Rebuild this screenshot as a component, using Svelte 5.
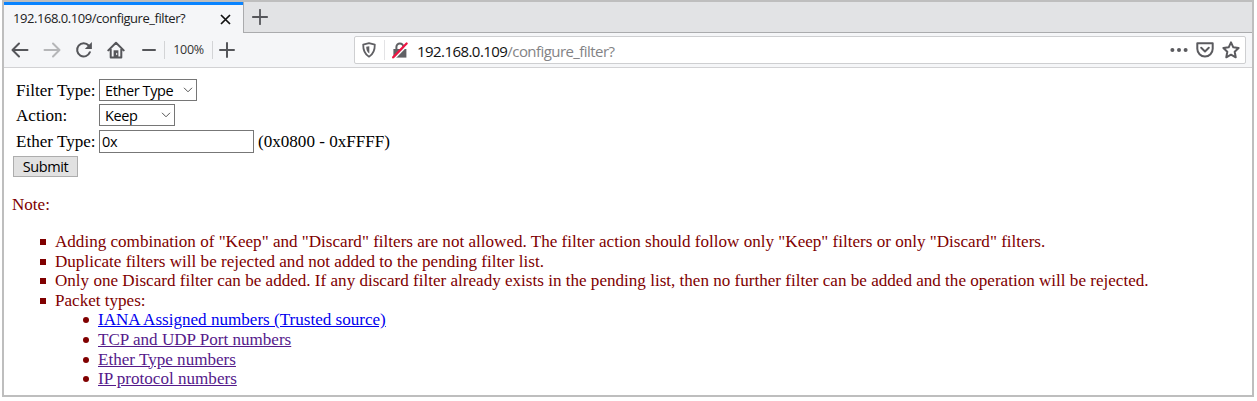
<script>
  const notes = [
    'Adding combination of "Keep" and "Discard" filters are not allowed. The filter action should follow only "Keep" filters or only "Discard" filters.',
    'Duplicate filters will be rejected and not added to the pending filter list.',
    'Only one Discard filter can be added. If any discard filter already exists in the pending list, then no further filter can be added and the operation will be rejected.'
  ];
  const links = [
    { label: 'IANA Assigned numbers (Trusted source)', visited: false },
    { label: 'TCP and UDP Port numbers', visited: true },
    { label: 'Ether Type numbers', visited: true },
    { label: 'IP protocol numbers', visited: true }
  ];
</script>

<div class="window">
  <div class="tabs">
    <div class="tab">
      <span class="title">192.168.0.109/configure_filter?</span>
      <svg class="close" width="11" height="11" viewBox="0 0 11 11"><path d="M1 1l9 9M10 1l-9 9" stroke="#111" stroke-width="1.7" /></svg>
    </div>
    <div class="strip">
      <svg width="16" height="16" viewBox="0 0 16 16"><path d="M8 .8v14.4M.8 8h14.4" stroke="#55565a" stroke-width="1.8" stroke-linecap="round" /></svg>
    </div>
  </div>
  <div class="toolbar">
    <div class="nav">
      <svg width="18" height="18" viewBox="0 0 18 18"><path d="M16.5 9H1.8M8 2.5L1.5 9 8 15.5" /></svg>
      <svg class="off" width="18" height="18" viewBox="0 0 18 18"><path d="M1.5 9h14.7M10 2.5L16.5 9 10 15.5" /></svg>
      <svg width="18" height="18" viewBox="0 0 18 18"><path d="M14.9 11.2A6.6 6.6 0 1 1 13.7 4.5" /><path class="solid" d="M16.9 1v7.1H9.8z" /></svg>
      <svg width="18" height="18" viewBox="0 0 18 18"><path d="M1.3 9.4L9 1.8l7.7 7.6M3.7 8v8.5h10.6V8" /><path class="solid" d="M6.6 9.3h4.8V16H6.6z" /><path class="knob" d="M9.7 12.3v1.4" /></svg>
    </div>
    <div class="zoom">
      <svg width="14" height="16" viewBox="0 0 14 16"><path d="M1 8h12" /></svg>
      <span class="level">100%</span>
      <svg width="16" height="16" viewBox="0 0 16 16"><path d="M1 8h14M8 1v14" /></svg>
    </div>
    <div class="address">
      <svg class="shield" width="14" height="16" viewBox="0 0 14 16"><path d="M7 1.2L12.8 2.6C12.9 8.5 11.6 12.2 7 14.7 2.4 12.2 1.1 8.5 1.2 2.6z" fill="none" stroke="#606064" stroke-width="1.8" stroke-linejoin="round" /><path d="M7.3 4.2v7.4C5 10 4.2 7.8 4.2 4.8z" fill="#606064" /></svg>
      <span class="rule"></span>
      <svg class="lock" width="16" height="17" viewBox="0 0 16 17"><path d="M4.4 7.5V5a3.5 3.5 0 0 1 7 0v2.5" fill="none" stroke="#606064" stroke-width="2" /><path d="M1.4 7h13v8.6h-13z" fill="#606064" /><path d="M2.4 16.6L15.6 3" stroke="#fff" stroke-width="1.5" /><path d="M1.2 15.3L14.6 1.5" stroke="#ee1543" stroke-width="2.3" stroke-linecap="round" /></svg>
      <span class="url"><b>192.168.0.109</b>/configure_filter?</span>
      <span class="actions">
        <svg width="18" height="6" viewBox="0 0 18 6"><g fill="#5b5b5f"><circle cx="2.4" cy="3" r="2" /><circle cx="9" cy="3" r="2" /><circle cx="15.6" cy="3" r="2" /></g></svg>
        <svg class="pocket" width="18" height="16" viewBox="0 0 18 16"><path d="M1.3 1.3h15.4v5.5a7.7 7.7 0 0 1-15.4 0z" /><path d="M5.2 5.8L9 9.4l3.8-3.6" /></svg>
        <svg class="star" width="18" height="18" viewBox="0 0 18 18"><path d="M9 1.4l2.3 4.9 5.3.7-3.9 3.8 1 5.5L9 13.7l-4.7 2.6 1-5.5L1.4 7l5.3-.7z" /></svg>
      </span>
    </div>
  </div>
  <div class="page">
    <div class="row first"><span class="label">Filter Type:</span><div class="select wide"><span class="ui">Ether Type</span><svg width="10" height="6" viewBox="0 0 10 6"><path d="M1 .8l4 4 4-4" /></svg></div></div>
    <div class="row second"><span class="label">Action:</span><div class="select"><span class="ui">Keep</span><svg width="10" height="6" viewBox="0 0 10 6"><path d="M1 .8l4 4 4-4" /></svg></div></div>
    <div class="row third"><span class="label">Ether Type:</span><div class="input"><span class="ui">0x</span></div><span class="range">(0x0800 - 0xFFFF)</span></div>
    <button class="ui">Submit</button>
    <div class="note">Note:</div>
    <ul class="notes">
      {#each notes as note}<li>{note}</li>{/each}
      <li>
        <span>Packet types:</span>
        <ul class="links">
          {#each links as link}<li><a href="#top" class:visited={link.visited}>{link.label}</a></li>{/each}
        </ul>
      </li>
    </ul>
  </div>
</div>

<style>
  :global(body) { background: #fff; overflow: hidden; }
  * { box-sizing: border-box; }
  svg { display: block; flex: none; }
  .window { width: 1252px; height: 397px; margin-left: 2px; border: 2px solid #bebebe; background: #fff; overflow: hidden; font-family: "Liberation Serif", serif; font-size: 17.08px; }
  .tabs { display: flex; height: 31px; background: #e2e3e5; }
  .tab { display: flex; align-items: center; width: 239px; background: #f5f6f8; border-top: 3px solid #0a84ff; padding: 0 12px 2px 9px; justify-content: space-between; }
  .close { margin-top: 2px; }
  .title { font: 13px "Open Sans", sans-serif; letter-spacing: -.45px; color: #222; white-space: nowrap; }
  .strip { flex: 1; border-left: 1px solid #aaabad; border-bottom: 1px solid #aaabad; padding: 7px 0 0 8px; }
  .toolbar { display: flex; align-items: center; height: 35px; background: #f5f6f8; border-bottom: 1px solid #d2d2d4; }
  .nav { display: flex; gap: 14px; padding-left: 7px; }
  .nav path, .zoom path { fill: none; stroke: #55565a; stroke-width: 2; stroke-linecap: round; stroke-linejoin: round; }
  .nav .solid { fill: #55565a; stroke: none; }
  .nav .knob { stroke: #f5f6f7; stroke-width: 1; }
  .nav .off path { stroke: #b5b6b8; }
  .zoom { display: flex; align-items: center; margin-left: 17px; }
  .level { width: 49px; height: 18px; margin: 0 6px 0 8px; border: solid #d3d4d6; border-width: 0 1px; font: 12.5px/17px "Open Sans", sans-serif; letter-spacing: -.35px; text-align: center; color: #333; }
  .address { display: flex; align-items: center; width: 892px; height: 28px; margin-left: 119px; background: #fff; border: 1px solid #cecfd1; border-radius: 2px; padding: 0 5px 0 7px; }
  .rule { width: 1px; height: 20px; background: #e3e3e5; margin: 0 7px 0 8px; }
  .url { font: 15px "Open Sans", sans-serif; color: #838386; margin-left: 9px; padding-top: 1px; letter-spacing: -.56px; white-space: nowrap; }
  .url b { font-weight: 400; color: #111; }
  .actions { display: flex; align-items: center; gap: 8px; margin-left: auto; }
  .actions path { fill: none; stroke: #5b5b5f; stroke-width: 2; stroke-linejoin: round; stroke-linecap: round; }
  .page { padding: 11px 8px 0; }
  .row { display: flex; align-items: center; padding-left: 4px; height: 22px; }
  .second { margin-top: 3px; }
  .third { margin-top: 4px; }
  .label { width: 83px; white-space: nowrap; }
  .label, .range { padding-top: 2px; }
  .ui { font-family: "Open Sans", sans-serif; font-size: 14.5px; letter-spacing: -.4px; color: #000; }
  .select { display: flex; align-items: center; justify-content: space-between; width: 76px; height: 22px; border: 1px solid #767676; padding: 0 3px 0 5px; }
  .select.wide { width: 98px; }
  .select path { fill: none; stroke: #555; stroke-width: 1; }
  .input { display: flex; align-items: center; width: 155px; height: 23px; border: 1px solid #777; padding-left: 2px; }
  .range { margin-left: 4px; }
  button { display: block; width: 65px; height: 21px; margin: 4px 0 0 1px; padding: 0; line-height: 19px; border: 1px solid #adadad; background: #e1e1e1; }
  .note { margin-top: 18px; line-height: 20px; color: #800000; }
  ul { margin: 0; padding: 0; list-style: none; }
  .notes { margin-top: 17px; padding-left: 43px; color: #800000; line-height: 19.6px; white-space: nowrap; }
  li { position: relative; }
  li::before { content: ""; position: absolute; left: -15px; top: 7px; width: 6px; height: 6px; background: #800000; }
  .links { padding-left: 43px; }
  .links li::before { border-radius: 50%; }
  a { color: #0000ee; text-decoration: underline; }
  a.visited { color: #551a8b; }
</style>
